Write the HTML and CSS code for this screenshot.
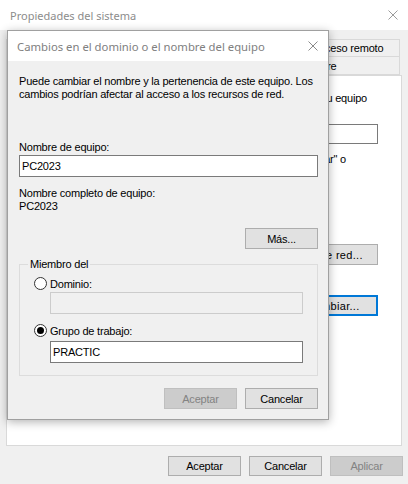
FILE: index.html
```html
<!DOCTYPE html>
<html lang="es">
<head>
<meta charset="utf-8">
<title>Propiedades del sistema</title>
<link rel="stylesheet" href="styles.css">
</head>
<body>
<div class="window">
  <div class="titlebar">
    <span class="title">Propiedades del sistema</span>
    <svg class="close" width="10" height="10" viewBox="0 0 10 10"><path d="M0.5 0.5L9.5 9.5M9.5 0.5L0.5 9.5" stroke="#9b9b9b" stroke-width="1" fill="none"/></svg>
  </div>
  <div class="tabs">
    <div class="tabrow">
      <div class="tab tab-adv"></div>
      <div class="tab tab-prot"></div>
      <div class="tab tab-remote">Acceso remoto</div>
    </div>
    <div class="tabrow">
      <div class="tab tab-name selected"></div>
      <div class="tab tab-hw">Hardware</div>
    </div>
  </div>
  <div class="panel">
    <div class="pline pline-1">su equipo</div>
    <div class="ptext"></div>
    <div class="pline pline-2">"sala de estar" o</div>
    <div class="pbtn pbtn-red">Id. de red...</div>
    <div class="pbtn pbtn-change">Cambiar...</div>
  </div>
  <div class="footer">
    <div class="btn">Aceptar</div>
    <div class="btn">Cancelar</div>
    <div class="btn disabled">Aplicar</div>
  </div>

  <div class="dialog">
    <div class="dlg-title">
      <span class="dlg-caption">Cambios en el dominio o el nombre del equipo</span>
      <svg class="close" width="10" height="10" viewBox="0 0 10 10"><path d="M0.5 0.5L9.5 9.5M9.5 0.5L0.5 9.5" stroke="#8a8a8a" stroke-width="1" fill="none"/></svg>
    </div>
    <div class="dlg-body">
      <p class="desc">Puede cambiar el nombre y la pertenencia de este equipo. Los cambios podrían afectar al acceso a los recursos de red.</p>
      <div class="label label-name">Nombre de equipo:</div>
      <div class="textbox">PC2023</div>
      <div class="label label-full">Nombre completo de equipo:</div>
      <div class="label">PC2023</div>
      <div class="btn btn-more">Más...</div>
      <fieldset class="group">
        <legend>Miembro del</legend>
        <div class="group-inner">
          <div class="radio-row">
            <span class="radio"></span><span>Dominio:</span>
          </div>
          <div class="textbox indent disabled-box"></div>
          <div class="radio-row radio-row-2">
            <span class="radio checked"></span><span>Grupo de trabajo:</span>
          </div>
          <div class="textbox indent wg">PRACTIC</div>
        </div>
      </fieldset>
      <div class="dlg-buttons">
        <div class="btn disabled">Aceptar</div>
        <div class="btn">Cancelar</div>
      </div>
    </div>
  </div>
</div>
</body>
</html>
```
FILE: styles.css
```css
* { box-sizing: border-box; }
html, body { margin: 0; padding: 0; }
body {
  width: 408px;
  height: 484px;
  overflow: hidden;
  background: #f0f0f0;
  font-family: "Liberation Sans", Arial, sans-serif;
  font-size: 11px;
  letter-spacing: -0.2px;
  color: #000;
}
.window {
  position: relative;
  width: 408px;
  height: 484px;
  background: #f0f0f0;
}
.titlebar {
  height: 30px;
  background: #fff;
  display: flex;
  align-items: center;
  justify-content: space-between;
  padding: 0 10px 0 10px;
}
.title {
  font-family: "Noto Sans", "Open Sans", sans-serif;
  font-size: 11px;
  letter-spacing: 0;
  color: #8c8c8c;
}
.close { display: block; }

.tabs {
  margin: 9px 8px 0 6px;
}
.tabrow {
  display: flex;
  height: 18px;
}
.tab {
  border: 1px solid #d9d9d9;
  border-left: none;
  background: #f0f0f0;
  display: flex;
  align-items: center;
  justify-content: center;
  white-space: nowrap;
  overflow: hidden;
}
.tabrow + .tabrow .tab { border-top: none; }
.tab:first-child { border-left: 1px solid #d9d9d9; }
.tab-adv { width: 135px; }
.tab-prot { width: 156px; }
.tab-remote { flex: 1; }
.tab-name { width: 222px; background: #fff; }
.tab-hw { flex: 1; }

.panel {
  margin: 0 6px;
  height: 371px;
  background: #fff;
  border: 1px solid #d9d9d9;
  padding: 0 23px 0 12px;
  display: flex;
  flex-direction: column;
  align-items: flex-end;
}
.pline {
  white-space: nowrap;
  line-height: 13px;
}
.pline-1 { margin-top: 16px; padding-right: 11px; }
.ptext {
  margin-top: 19px;
  width: 300px;
  height: 20px;
  border: 1px solid #7a7a7a;
  background: #fff;
}
.pline-2 { margin-top: 9px; padding-right: 32px; }
.pbtn {
  width: 90px;
  height: 21px;
  border: 1px solid #adadad;
  background: #e1e1e1;
  display: flex;
  align-items: center;
  justify-content: center;
  letter-spacing: 0.3px;
  white-space: nowrap;
}
.pbtn-red { margin-top: 78px; }
.pbtn-change { margin-top: 30px; border: 2px solid #0078d7; }

.footer {
  display: flex;
  justify-content: flex-end;
  gap: 8px;
  padding: 10px 5px 0 0;
}
.btn {
  width: 73px;
  height: 20px;
  border: 1px solid #adadad;
  background: #e1e1e1;
  display: flex;
  align-items: center;
  justify-content: center;
}
.btn.disabled {
  background: #cccccc;
  border-color: #bfbfbf;
  color: #838383;
}

.dialog {
  position: absolute;
  left: 7px;
  top: 30px;
  width: 322px;
  height: 390px;
  border: 1px solid #a0a0a0;
  background: #f0f0f0;
  box-shadow: 0 2px 9px rgba(0, 0, 0, 0.3);
  display: flex;
  flex-direction: column;
}
.dlg-title {
  height: 30px;
  background: #fff;
  display: flex;
  align-items: center;
  justify-content: space-between;
  padding: 0 10px 0 9px;
  flex: none;
}
.dlg-caption {
  font-family: "Noto Sans", "Open Sans", sans-serif;
  font-size: 11.3px;
  letter-spacing: 0;
  color: #808080;
}
.dlg-body {
  padding: 14px 10px 0 11px;
  display: flex;
  flex-direction: column;
}
.desc {
  margin: 0;
  line-height: 13px;
}
.label { line-height: 13px; }
.label-name { margin-top: 40px; }
.textbox {
  margin-top: 1px;
  height: 22px;
  border: 1px solid #7a7a7a;
  background: #fff;
  padding: 3px 2px 0;
  line-height: 14px;
}
.label-full { margin-top: 10px; }
.btn-more {
  align-self: flex-end;
  margin-top: 15px;
  height: 21px;
}
.group {
  margin: 9px 0 0;
  padding: 0 14px 12px 14px;
  border: 1px solid #dcdcdc;
  min-width: 0;
}
.group legend {
  margin-left: -6px;
  padding: 0 2px;
  line-height: 13px;
}
.group-inner {
  display: flex;
  flex-direction: column;
}
.radio-row {
  display: flex;
  align-items: center;
  height: 13px;
  margin-top: 6px;
  gap: 3px;
}
.radio-row-2 { margin-top: 10px; }
.radio {
  width: 13px;
  height: 13px;
  border: 1px solid #333;
  border-radius: 50%;
  background: #fff;
  display: flex;
  align-items: center;
  justify-content: center;
}
.radio.checked::after {
  content: "";
  width: 7px;
  height: 7px;
  border-radius: 50%;
  background: #000;
}
.indent { margin-left: 16px; }
.disabled-box {
  margin-top: 2px;
  border-color: #cccccc;
  background: #f0f0f0;
}
.wg { margin-top: 4px; }
.dlg-buttons {
  display: flex;
  justify-content: flex-end;
  gap: 8px;
  margin-top: 12px;
}
.dlg-buttons .btn { height: 21px; }
```
